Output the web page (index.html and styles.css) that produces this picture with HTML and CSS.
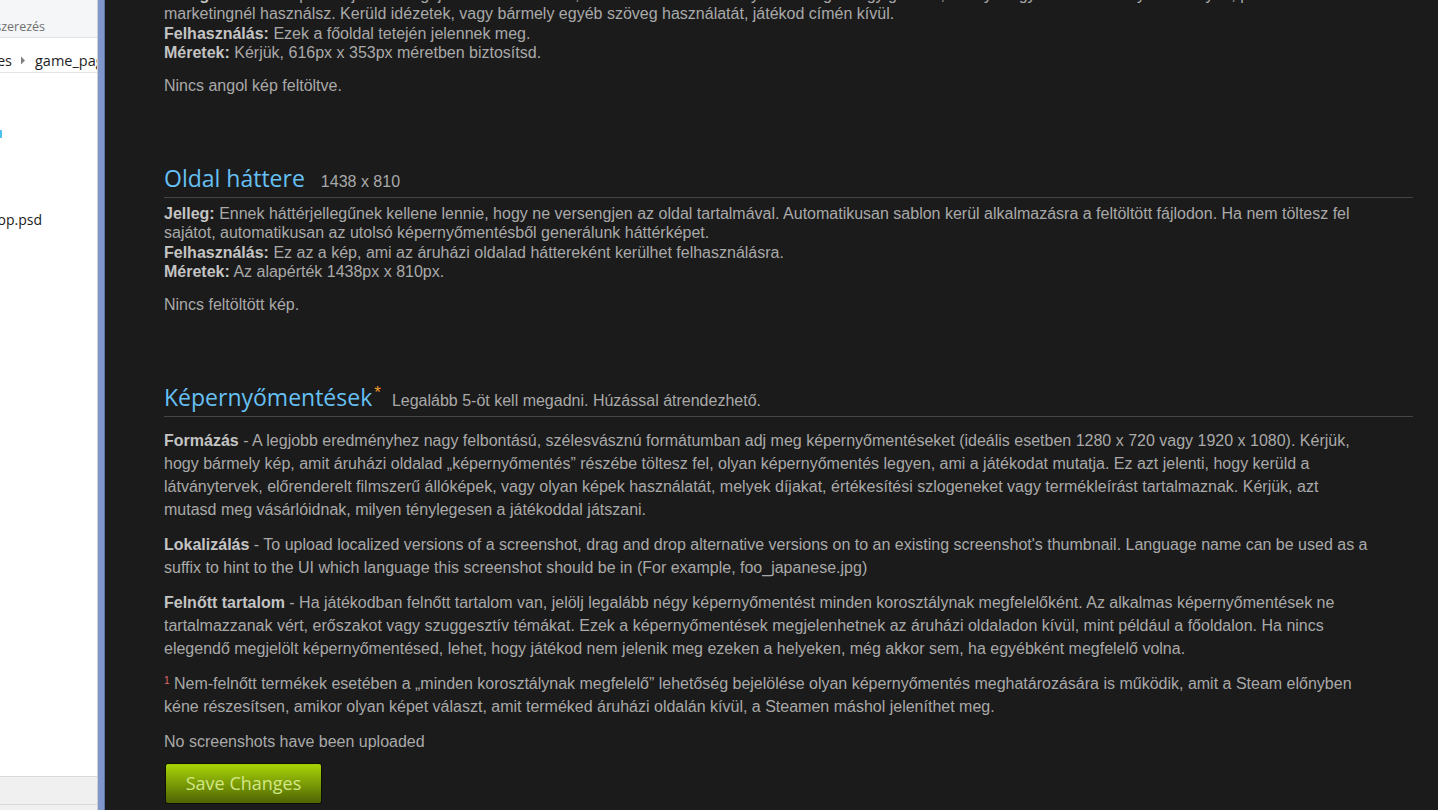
FILE: index.html
```html
<!DOCTYPE html>
<html lang="hu">
<head>
<meta charset="utf-8">
<title>Steamworks – Grafikus elemek</title>
<link rel="stylesheet" href="styles.css">
</head>
<body>
<div class="explorer">
  <div class="ribbon">
    <div class="clip-left ribbon-label"><span>Rendszerezés</span></div>
  </div>
  <div class="crumbs">
    <div class="clip-left crumb-prev"><span>Images</span></div>
    <svg class="crumb-arrow" width="6" height="9" viewBox="0 0 6 9"><path d="M1 0.5 L5 4.5 L1 8.5 Z" fill="#808080"/></svg>
    <span class="crumb-cur">game_page</span>
  </div>
  <div class="files">
    <div class="file-icon-bit"></div>
    <div class="clip-left file-name"><span>header_desktop.psd</span></div>
  </div>
  <div class="statusbar"></div>
  <div class="statusbar-low"></div>
</div>
<div class="divider"></div>
<main class="page">
  <section class="asset asset-cont">
    <p class="desc"><b>Jelleg:</b> Ennek a képnek a játékod logóját kell tartalmaznia, és nem használhatsz olyan szöveget vagy grafikát, amelyet egyébként bármely más helyen, például a<br>marketingnél használsz. Kerüld idézetek, vagy bármely egyéb szöveg használatát, játékod címén kívül.<br><b>Felhasználás:</b> Ezek a főoldal tetején jelennek meg.<br><b>Méretek:</b> Kérjük, 616px x 353px méretben biztosítsd.</p>
    <p class="status">Nincs angol kép feltöltve.</p>
  </section>

  <section class="asset">
    <h2 class="asset-title"><span>Oldal háttere</span><span class="dims">1438 x 810</span></h2>
    <p class="desc"><b>Jelleg:</b> Ennek háttérjellegűnek kellene lennie, hogy ne versengjen az oldal tartalmával. Automatikusan sablon kerül alkalmazásra a feltöltött fájlodon. Ha nem töltesz fel<br>sajátot, automatikusan az utolsó képernyőmentésből generálunk háttérképet.<br><b>Felhasználás:</b> Ez az a kép, ami az áruházi oldalad háttereként kerülhet felhasználásra.<br><b>Méretek:</b> Az alapérték 1438px x 810px.</p>
    <p class="status">Nincs feltöltött kép.</p>
  </section>

  <section class="asset asset-shots">
    <h2 class="asset-title"><span>Képernyőmentések</span><span class="req">*</span><span class="dims dims-after-req">Legalább 5-öt kell megadni. Húzással átrendezhető.</span></h2>
    <p class="info"><b>Formázás</b> - A legjobb eredményhez nagy felbontású, szélesvásznú formátumban adj meg képernyőmentéseket (ideális esetben 1280 x 720 vagy 1920 x 1080). Kérjük,<br>hogy bármely kép, amit áruházi oldalad „képernyőmentés” részébe töltesz fel, olyan képernyőmentés legyen, ami a játékodat mutatja. Ez azt jelenti, hogy kerüld a<br>látványtervek, előrenderelt filmszerű állóképek, vagy olyan képek használatát, melyek díjakat, értékesítési szlogeneket vagy termékleírást tartalmaznak. Kérjük, azt<br>mutasd meg vásárlóidnak, milyen ténylegesen a játékoddal játszani.</p>
    <p class="info"><b>Lokalizálás</b> - To upload localized versions of a screenshot, drag and drop alternative versions on to an existing screenshot's thumbnail. Language name can be used as a<br>suffix to hint to the UI which language this screenshot should be in (For example, foo_japanese.jpg)</p>
    <p class="info"><b>Felnőtt tartalom</b> - Ha játékodban felnőtt tartalom van, jelölj legalább négy képernyőmentést minden korosztálynak megfelelőként. Az alkalmas képernyőmentések ne<br>tartalmazzanak vért, erőszakot vagy szuggesztív témákat. Ezek a képernyőmentések megjelenhetnek az áruházi oldaladon kívül, mint például a főoldalon. Ha nincs<br>elegendő megjelölt képernyőmentésed, lehet, hogy játékod nem jelenik meg ezeken a helyeken, még akkor sem, ha egyébként megfelelő volna.</p>
    <p class="info"><sup class="fn">1</sup> Nem-felnőtt termékek esetében a „minden korosztálynak megfelelő” lehetőség bejelölése olyan képernyőmentés meghatározására is működik, amit a Steam előnyben<br>kéne részesítsen, amikor olyan képet választ, amit terméked áruházi oldalán kívül, a Steamen máshol jeleníthet meg.</p>
    <p class="info">No screenshots have been uploaded</p>
    <button class="btn-save" type="button">Save Changes</button>
  </section>
</main>
</body>
</html>
```
FILE: styles.css
```css
* { box-sizing: border-box; }
html, body { margin: 0; padding: 0; }
body {
  width: 1438px;
  height: 810px;
  overflow: hidden;
  display: flex;
  background: #1b1b1b;
}

/* ---------- left explorer window ---------- */
.explorer {
  width: 98px;
  flex: none;
  display: flex;
  flex-direction: column;
  background: #ffffff;
  border-right: 1px solid #cfcfcf;
  overflow: hidden;
  font-family: "Open Sans", "Noto Sans", sans-serif;
}
.clip-left {
  display: flex;
  justify-content: flex-end;
  overflow: hidden;
  white-space: nowrap;
  flex: none;
}
.ribbon {
  height: 38px;
  background: #f5f6f7;
  border-bottom: 1px solid #e3e3e3;
  display: flex;
  align-items: flex-end;
  padding-bottom: 1px;
}
.ribbon-label {
  width: 45px;
  font-size: 12.5px;
  color: #707070;
  line-height: 18px;
}
.crumbs {
  height: 35px;
  border-bottom: 1px solid #e3e3e3;
  display: flex;
  align-items: center;
  white-space: nowrap;
  font-size: 14.5px;
  color: #1e1e1e;
  padding-top: 10px;
}
.crumb-prev { width: 12px; }
.crumb-arrow { flex: none; margin: 0 0 0 8px; }
.crumb-cur { margin-left: 9px; }
.files {
  flex: 1;
  padding-top: 57px;
}
.file-icon-bit {
  width: 2px;
  height: 8px;
  background: #4cc0ea;
  border-radius: 0 1px 1px 0;
}
.file-name {
  width: 42px;
  margin-top: 72px;
  font-size: 14px;
  line-height: 20px;
  color: #1a1a1a;
}
.statusbar {
  height: 28px;
  flex: none;
  background: #f0f0f0;
  border-top: 1px solid #d9d9d9;
}
.statusbar-low {
  height: 6px;
  flex: none;
  background: #f0f0f0;
  border-top: 1px solid #d9d9d9;
}
.divider {
  width: 7px;
  flex: none;
  background: #7f97cb;
  border-right: 1px solid #5f73a0;
}

/* ---------- Steamworks page ---------- */
.page {
  flex: 1;
  padding: 0 25px 0 59px;
  font-family: "Liberation Sans", Arial, sans-serif;
  font-size: 16px;
  color: #a9a9a9;
  overflow: hidden;
}
.page b { font-weight: bold; color: #c4c4c4; }
.page p { margin: 0; }

.asset { margin-top: 69px; }
.asset.asset-cont { margin-top: -15.4px; }

.asset-title {
  margin: 0;
  height: 33px;
  display: flex;
  align-items: baseline;
  font-family: "Open Sans", "Liberation Sans", sans-serif;
  font-weight: normal;
  font-size: 23px;
  line-height: 26px;
  color: #66c0f4;
  padding-bottom: 6px;
  border-bottom: 1px solid #454545;
  white-space: nowrap;
}
.dims {
  font-family: "Liberation Sans", Arial, sans-serif;
  font-size: 16px;
  line-height: 26px;
  color: #a9a9a9;
  margin-left: 16px;
}
.dims-after-req { margin-left: 11px; }
.req {
  align-self: flex-start;
  font-family: "Liberation Sans", Arial, sans-serif;
  font-size: 17px;
  line-height: 17px;
  color: #f29a2c;
  margin: 0 0 0 2px;
}

.desc {
  line-height: 19.6px;
  margin-top: 6px !important;
  white-space: nowrap;
}
.asset-cont .desc { margin-top: 0 !important; }
.status {
  line-height: 19.6px;
  margin-top: 13px !important;
}

.info {
  line-height: 23px;
  margin-top: 12px !important;
  white-space: nowrap;
}
.fn {
  font-size: 10px;
  color: #e06a6a;
  vertical-align: 5px;
  line-height: 0;
}

.btn-save {
  display: block;
  margin-top: 11px;
  margin-left: 2px;
  width: 155px;
  height: 39px;
  border: none;
  border-radius: 2px;
  padding: 0;
  background: linear-gradient(to bottom, #a4d007 5%, #536904 95%);
  box-shadow: 0 0 0 1px #0c1006;
  color: #d2e885;
  font-family: "Open Sans", "Liberation Sans", sans-serif;
  font-size: 18px;
  line-height: 39px;
  text-align: center;
  cursor: pointer;
}
```
